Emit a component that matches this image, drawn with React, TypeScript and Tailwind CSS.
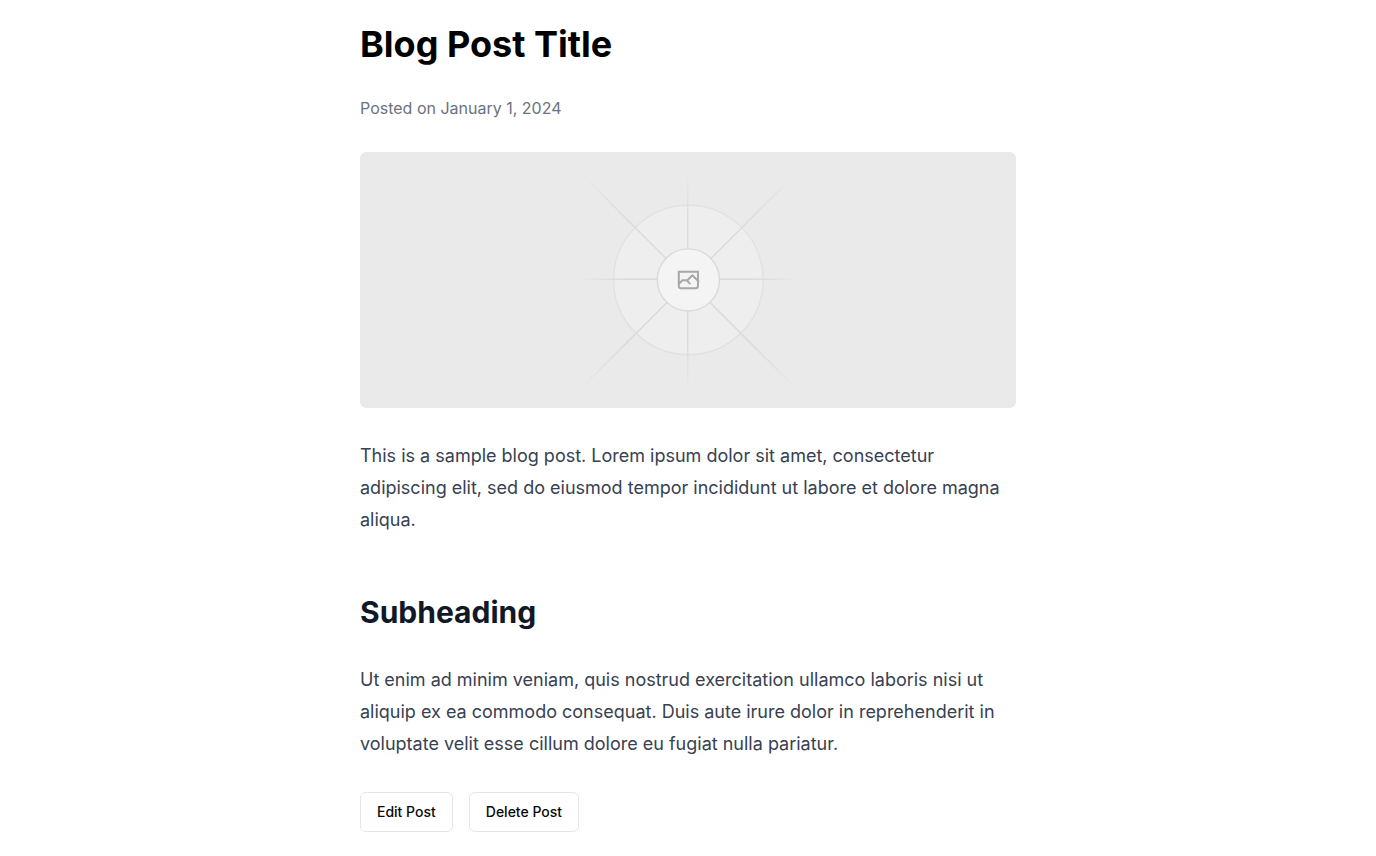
const rays = [
  { id: "ray-rising", x1: 406, y1: 796.6, x2: 797.4, y2: 405.2 },
  { id: "ray-horizontal", x1: 404.8, y1: 598.67, x2: 796.6, y2: 598.68 },
  { id: "ray-vertical", x1: 599.5, y1: 795.7, x2: 599.51, y2: 404 },
  { id: "ray-falling", x1: 795.7, y1: 796.6, x2: 404.3, y2: 405.2 },
];

function Placeholder() {
  return (
    <svg
      viewBox="0 0 1200 1200"
      preserveAspectRatio="xMidYMid slice"
      fill="none"
      className="h-64 w-full rounded-md bg-[#eaeaea]"
      role="img"
      aria-label="Blog post cover"
    >
      <defs>
        {rays.map(({ id, x1, y1, x2, y2 }) => (
          <linearGradient key={id} id={id} x1={x1} y1={y1} x2={x2} y2={y2} gradientUnits="userSpaceOnUse">
            <stop stopColor="#C9C9C9" stopOpacity="0" />
            <stop offset="0.208" stopColor="#C9C9C9" />
            <stop offset="0.792" stopColor="#C9C9C9" />
            <stop offset="1" stopColor="#C9C9C9" stopOpacity="0" />
          </linearGradient>
        ))}
      </defs>
      <g opacity="0.5">
        <g opacity="0.5">
          <circle cx="600.709" cy="599.88" r="136.62" fill="#FAFAFA" />
          <circle cx="600.709" cy="599.88" r="136.62" stroke="#C9C9C9" strokeWidth="2.418" />
        </g>
        {rays.map(({ id, x1, y1, x2, y2 }) => (
          <line key={id} x1={x1} y1={y1} x2={x2} y2={y2} stroke={`url(#${id})`} strokeWidth="2.418" />
        ))}
        <circle cx="600.709" cy="599.88" r="56.825" fill="#fff" />
        <path
          fill="#666"
          fillRule="evenodd"
          clipRule="evenodd"
          d="M616.426 586.58h-31.434v16.176l3.553-3.554.531-.531h9.068l.074-.074 8.463-8.463h2.565l7.18 7.181V586.58Zm-15.715 14.654 3.698 3.699 1.283 1.282-2.565 2.565-1.282-1.283-5.2-5.199h-6.066l-5.514 5.514-.073.073v2.876a2.418 2.418 0 0 0 2.418 2.418h26.598a2.418 2.418 0 0 0 2.418-2.418v-8.317l-8.463-8.463-7.181 7.181-.071.072Zm-19.347 5.442v4.085a6.045 6.045 0 0 0 6.046 6.045h26.598a6.044 6.044 0 0 0 6.045-6.045v-7.108l1.356-1.355-1.282-1.283-.074-.073v-17.989h-38.689v23.43l-.146.146.146.147Z"
        />
        <circle cx="600.709" cy="599.88" r="56.825" stroke="#C9C9C9" strokeWidth="2.418" />
      </g>
    </svg>
  );
}

const buttonClass =
  "h-10 rounded-md border border-[#e5e5e5] bg-white px-4 text-sm font-medium text-[#0a0a0a]";

export default function App() {
  return (
    <main className="mx-auto w-full max-w-2xl px-2 py-6 font-['Inter',sans-serif]">
      <h1 className="text-4xl font-bold text-black">Blog Post Title</h1>
      <p className="mt-8 text-base text-[#6b7280]">Posted on January 1, 2024</p>
      <div className="mt-8">
        <Placeholder />
      </div>
      <p className="mt-8 text-lg leading-8 text-[#374151]">
        This is a sample blog post. Lorem ipsum dolor sit amet, consectetur adipiscing elit, sed do
        eiusmod tempor incididunt ut labore et dolore magna aliqua.
      </p>
      <h2 className="mt-14 text-3xl leading-10 font-bold text-[#111827]">Subheading</h2>
      <p className="mt-8 text-lg leading-8 text-[#374151]">
        Ut enim ad minim veniam, quis nostrud exercitation ullamco laboris nisi ut aliquip ex ea
        commodo consequat. Duis aute irure dolor in reprehenderit in voluptate velit esse cillum
        dolore eu fugiat nulla pariatur.
      </p>
      <div className="mt-8 flex gap-4">
        <button type="button" className={buttonClass}>Edit Post</button>
        <button type="button" className={buttonClass}>Delete Post</button>
      </div>
    </main>
  );
}
